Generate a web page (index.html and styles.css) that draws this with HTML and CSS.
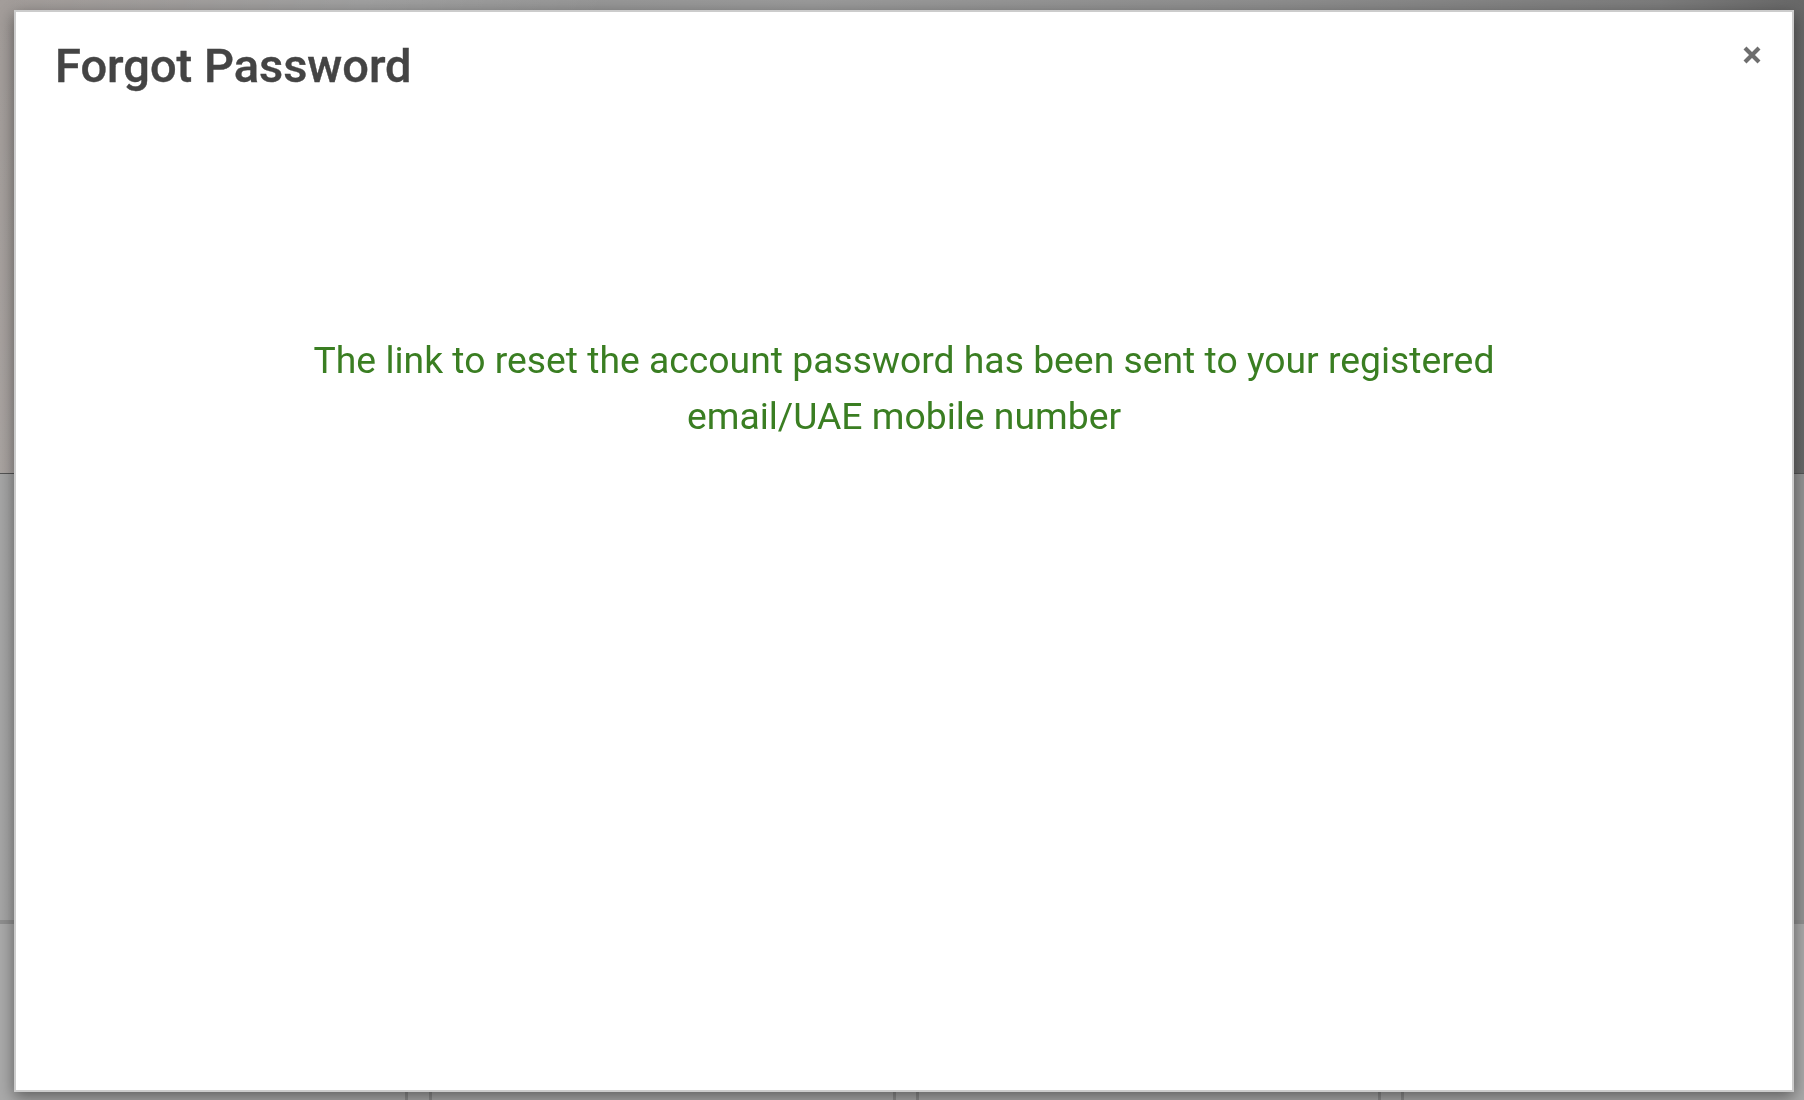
FILE: index.html
```html
<!DOCTYPE html>
<html lang="en">
<head>
<meta charset="utf-8">
<title>Forgot Password</title>
<link rel="stylesheet" href="styles.css">
</head>
<body>
<div class="page">
  <header class="hero"></header>
  <section class="content"></section>
  <div class="band"></div>
  <footer class="footer">
    <div class="card card-first"></div>
    <div class="card card-mid"></div>
    <div class="card card-third"></div>
    <div class="card card-last"></div>
  </footer>
</div>

<div class="modal" role="dialog" aria-labelledby="fp-title">
  <div class="modal-header">
    <h2 id="fp-title" class="modal-title">Forgot Password</h2>
    <button class="close" type="button" aria-label="Close">
      <svg width="20" height="20" viewBox="0 0 20 20" aria-hidden="true">
        <path d="M3 3 L17 17 M17 3 L3 17" stroke="#6e6e6e" stroke-width="4.2" stroke-linecap="butt" fill="none"/>
      </svg>
    </button>
  </div>
  <div class="modal-body">
    <p class="success-msg">The link to reset the account password has been sent to your registered email/UAE mobile number</p>
  </div>
</div>
</body>
</html>
```

FILE: styles.css
```css
html, body {
  margin: 0;
  padding: 0;
}

body {
  width: 1804px;
  height: 1100px;
  overflow: hidden;
  background: #a9a9a9;
  font-family: Roboto, "Liberation Sans", Arial, sans-serif;
}

.page {
  display: flex;
  flex-direction: column;
  height: 1100px;
}

.hero {
  height: 473px;
  flex: 0 0 auto;
  border-bottom: 1px solid #555;
  background:
    linear-gradient(115deg, rgba(255,255,255,0) 0%, rgba(255,255,255,0.12) 18%, rgba(255,255,255,0) 30%),
    linear-gradient(90deg, #a39d9a 0%, #939393 20%, #9a9a9a 45%, #8e8e8e 70%, #7c7c7c 92%, #686868 100%);
}

.content {
  height: 446px;
  flex: 0 0 auto;
  background: linear-gradient(90deg, #a6a6a6 0%, #9a9a9a 50%, #949494 100%);
}

.band {
  height: 4px;
  flex: 0 0 auto;
  background: #8f8f8f;
}

.footer {
  flex: 1 1 auto;
  display: flex;
  background: #aaaaaa;
}

.card {
  box-sizing: border-box;
  height: 100%;
  flex: 0 0 auto;
}

.card-first {
  width: 408px;
  border-right: 3px solid #8d8d8d;
  margin-right: 21px;
}

.card-mid {
  width: 467px;
  border-left: 3px solid #8d8d8d;
  border-right: 3px solid #8d8d8d;
  margin-right: 20px;
}

.card-third {
  width: 465px;
  border-left: 3px solid #8d8d8d;
  border-right: 3px solid #8d8d8d;
  margin-right: 20px;
}

.card-last {
  flex: 1 1 auto;
  border-left: 3px solid #8d8d8d;
}

/* Modal overlay */
.modal {
  position: fixed;
  left: 14px;
  top: 10px;
  width: 1780px;
  height: 1082px;
  box-sizing: border-box;
  background: #ffffff;
  border: 2px solid #cccccc;
  box-shadow: 0 5px 15px rgba(0, 0, 0, 0.45);
  display: flex;
  flex-direction: column;
}

.modal-header {
  display: flex;
  justify-content: space-between;
  align-items: flex-start;
  padding: 28px 30px 0 39px;
}

.modal-title {
  margin: 0;
  font-size: 47px;
  line-height: 1.1;
  font-weight: 500;
  color: #444444;
  -webkit-text-stroke: 0.4px #444444;
}

.close {
  margin: 5px 0 0 0;
  padding: 0;
  border: 0;
  background: transparent;
  width: 20px;
  height: 20px;
  cursor: pointer;
  display: flex;
}

.modal-body {
  padding: 240px 40px 0;
}

.success-msg {
  margin: 0 auto;
  max-width: 1240px;
  text-align: center;
  font-size: 37.3px;
  line-height: 56px;
  font-weight: 400;
  color: #3a7e22;
}
```
